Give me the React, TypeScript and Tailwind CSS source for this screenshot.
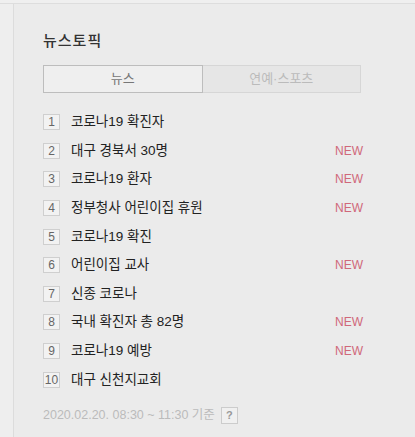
import React from 'react';

const topics = [
  { rank: 1, title: '코로나19 확진자', isNew: false },
  { rank: 2, title: '대구 경북서 30명', isNew: true },
  { rank: 3, title: '코로나19 환자', isNew: true },
  { rank: 4, title: '정부청사 어린이집 휴원', isNew: true },
  { rank: 5, title: '코로나19 확진', isNew: false },
  { rank: 6, title: '어린이집 교사', isNew: true },
  { rank: 7, title: '신종 코로나', isNew: false },
  { rank: 8, title: '국내 확진자 총 82명', isNew: true },
  { rank: 9, title: '코로나19 예방', isNew: true },
  { rank: 10, title: '대구 신천지교회', isNew: false },
];

export default function App() {
  return (
    <div
      className="w-[415px] h-[437px] bg-[#ebebeb] overflow-hidden"
      style={{ fontFamily: '"Liberation Sans", "Noto Sans CJK KR", sans-serif' }}
    >
      <div className="h-[3px] bg-[#efefef]" />
      <div className="flex h-full border-t border-[#dddddd]">
        <div className="w-[14px] bg-[#eeeeee] border-r border-[#dcdcdc]" />
        <div className="flex-1 pl-[29px] pt-[26px]">
          <h2 className="text-[15px] font-medium text-[#333333] leading-[22px] tracking-[1px]">뉴스토픽</h2>

          {/* tabs */}
          <div className="mt-[13px] flex w-[318px] h-[28px]">
            <div className="flex-1 flex items-center justify-center border border-[#bdbdbd] bg-[#efefef] text-[13px] text-[#777777]">
              뉴스
            </div>
            <div className="flex-1 flex items-center justify-center border border-l-0 border-[#d6d6d6] bg-[#e6e6e6] text-[13px] text-[#bbbbbb]">
              연예·스포츠
            </div>
          </div>

          {/* ranking */}
          <ul className="mt-[15px] w-[320px]">
            {topics.map((t) => (
              <li key={t.rank} className="flex items-center h-[28.6px]">
                <span className="w-[17px] h-[16px] flex items-center justify-center border border-[#cfcfcf] bg-[#f2f2f2] text-[12px] text-[#666666] leading-none">
                  {t.rank}
                </span>
                <span className="ml-[11px] flex-1 text-[13.5px] text-[#222222]">{t.title}</span>
                {t.isNew && (
                  <span className="text-[12px] text-[#d0687a]">NEW</span>
                )}
              </li>
            ))}
          </ul>

          {/* footer */}
          <div className="mt-[12px] flex items-center text-[12.5px] text-[#bbbbbb]">
            <span>2020.02.20. 08:30 ~ 11:30 기준</span>
            <span className="ml-[6px] w-[17px] h-[17px] flex items-center justify-center border border-[#cccccc] bg-[#f0f0f0] text-[11px] font-bold text-[#999999]">
              ?
            </span>
          </div>
        </div>
      </div>
    </div>
  );
}
